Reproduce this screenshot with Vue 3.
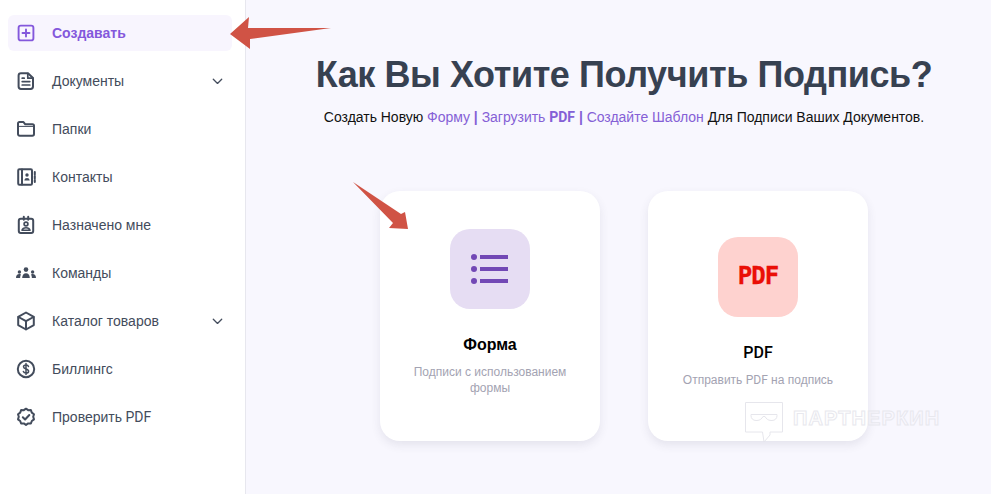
<script setup>
const items = [
  { label: 'Документы', icon: 'doc', caret: true },
  { label: 'Папки', icon: 'folder' },
  { label: 'Контакты', icon: 'contacts' },
  { label: 'Назначено мне', icon: 'badge' },
  { label: 'Команды', icon: 'team' },
  { label: 'Каталог товаров', icon: 'box', caret: true },
  { label: 'Биллингс', icon: 'dollar' },
  { label: 'Проверить', latin: 'PDF', icon: 'verify' },
]
</script>

<template>
  <div class="page">
    <aside class="sidebar">
      <div class="item active">
        <svg class="icon" viewBox="0 0 20 20" fill="none" stroke="currentColor" stroke-width="1.9">
          <rect x="2.6" y="2.6" width="14.800" height="14.800" rx="2.200" />
          <path d="M10 6.500v7M6.500 10h7" stroke-linecap="round" />
        </svg>
        <span class="label">Создавать</span>
      </div>
      <div v-for="it in items" :key="it.label" class="item">
        <svg class="icon" viewBox="0 0 20 20" fill="none" stroke="currentColor" stroke-width="2" stroke-linejoin="round" stroke-linecap="round">
          <template v-if="it.icon === 'doc'">
            <path d="M5 2.200h7l5 4.800v8.600a2.400 2.400 0 0 1-2.400 2.400H5a2.400 2.400 0 0 1-2.400-2.400V4.600A2.400 2.400 0 0 1 5 2.200z" />
            <path d="M11.800 2.500v4.700h5M6.200 7.200h2M6.200 10.600h7.600M6.200 14h7.600" stroke-width="1.700" />
          </template>
          <template v-else-if="it.icon === 'folder'">
            <path d="M2 8V4.400a1.300 1.300 0 0 1 1.300-1.300h4.200l1.800 2.200h7.200A1.500 1.500 0 0 1 18 6.800v8.200a1.700 1.700 0 0 1-1.700 1.700H3.700A1.700 1.700 0 0 1 2 15z" />
            <path d="M2.500 7.400h15" stroke-width="1" />
          </template>
          <template v-else-if="it.icon === 'contacts'">
            <rect x="2.200" y="2.200" width="13.800" height="15.600" rx="1.200" />
            <path d="M6 2.500v15M18.800 5v2.400M18.800 9v2.400M18.800 13v2" />
            <circle cx="11" cy="8" r="1.700" fill="currentColor" stroke="none" />
            <path d="M8.300 13.600c.2-1.800 1.300-2.600 2.700-2.600s2.500.8 2.700 2.600z" fill="currentColor" stroke="none" />
          </template>
          <template v-else-if="it.icon === 'badge'">
            <rect x="2.800" y="3.800" width="14.400" height="14.200" rx="2" />
            <path d="M7.800 1.800v3M12.200 1.800v3" />
            <circle cx="10" cy="9" r="1.900" stroke-width="1.700" />
            <path d="M6 15.300c.5-1.800 2.100-2.500 4-2.500s3.500.7 4 2.500z" stroke-width="1.600" />
          </template>
          <template v-else-if="it.icon === 'team'">
            <g fill="currentColor" stroke="none">
              <circle cx="10" cy="6.600" r="2.300" />
              <path d="M6.200 15c0-3 1.600-4.700 3.800-4.700s3.800 1.700 3.800 4.700z" />
              <circle cx="3.400" cy="9" r="1.700" />
              <path d="M0 15c0-2.400 1.300-3.900 3.400-3.900.6 0 1.100.1 1.500.3-.5 1-.8 2.200-.8 3.600z" />
              <circle cx="16.600" cy="9" r="1.700" />
              <path d="M20 15c0-2.400-1.300-3.900-3.400-3.900-.6 0-1.100.1-1.500.3.5 1 .8 2.200.8 3.600z" />
            </g>
          </template>
          <template v-else-if="it.icon === 'box'">
            <path d="M10 1.500l7.800 4.400v8.200L10 18.500l-7.800-4.400V5.900z" />
            <path d="M2.500 6L10 10.200 17.500 6M10 10.200v8" />
          </template>
          <template v-else-if="it.icon === 'dollar'">
            <circle cx="10" cy="10" r="8.200" />
            <path d="M12.500 7.500c-.3-1-1.200-1.600-2.500-1.600-1.400 0-2.500.8-2.500 1.900s1 1.800 2.500 2.200 2.600 1 2.600 2.200-1.100 1.900-2.600 1.900c-1.400 0-2.300-.6-2.600-1.600M10 4.400v11.200" stroke-width="1.500" />
          </template>
          <template v-else>
            <path d="M10 1.700l2.200 1.500 2.700-.1.900 2.500 2.200 1.600-.8 2.600.8 2.600-2.200 1.600-.9 2.500-2.700-.1-2.200 1.500-2.200-1.500-2.700.1-.9-2.500-2.200-1.600.8-2.600-.8-2.600 2.200-1.600.9-2.500 2.700.1z" />
            <path d="M6.800 10.200l2.300 2.300 4.200-4.500" />
          </template>
        </svg>
        <span class="label">{{ it.label }}<span v-if="it.latin" class="latin">&nbsp;{{ it.latin }}</span></span>
        <svg v-if="it.caret" class="caret" viewBox="0 0 12 8" fill="none" stroke="currentColor" stroke-width="1.500" stroke-linecap="round" stroke-linejoin="round">
          <path d="M1.200 1.500L6 6.200l4.800-4.700" />
        </svg>
      </div>
    </aside>

    <main class="main">
      <h1 class="title">Как Вы Хотите Получить Подпись?</h1>
      <p class="sub">
        Создать Новую <span class="link">Форму</span> <b class="link">|</b>
        <span class="link"> Загрузить</span> <b class="link latin">PDF</b> <b class="link">|</b>
        <span class="link"> Создайте Шаблон</span> Для Подписи Ваших Документов.
      </p>
      <div class="cards">
        <section class="card">
          <div class="tile tile-form">
            <svg width="38" height="30" viewBox="0 0 38 30" fill="#7248b5">
              <circle cx="3" cy="3" r="3" />
              <circle cx="3" cy="15" r="3" />
              <circle cx="3" cy="27" r="3" />
              <rect x="9" y="1" width="28" height="4" />
              <rect x="9" y="13" width="28" height="4" />
              <rect x="9" y="25" width="28" height="4" />
            </svg>
          </div>
          <h2 class="card-title">Форма</h2>
          <p class="card-desc">Подписи с использованием формы</p>
        </section>
        <section class="card">
          <div class="tile tile-pdf"><span class="pdf-mark">PDF</span></div>
          <h2 class="card-title latin">PDF</h2>
          <p class="card-desc">Отправить <span class="latin">PDF</span> на подпись</p>
        </section>
      </div>
    </main>

    <svg class="arrows" width="991" height="494" viewBox="0 0 991 494">
      <polygon fill="#d05345" points="230,34 249,17 248,28 331,28 250,39 250,49" />
      <polygon fill="#d05345" points="353,182 401,214 405,212 408,229 389,228 393,223" />
    </svg>

    <div class="watermark">
      <svg width="40" height="42" viewBox="0 0 40 42" fill="none" stroke="#e6e6ec" stroke-width="1">
        <path d="M1.500 1.500h37v29.500H26v3l-6 7-1.500-10H1.500z" />
        <path d="M7 13.500h26v1c0 3-2 5-5 5h-1c-3 0-5-2-6-4h-2c-1 2-3 4-6 4h-1c-3 0-5-2-5-5z" />
      </svg>
      <span class="wm-text">ПАРТНЕРКИН</span>
    </div>
  </div>
</template>

<style scoped>
.page {
  position: relative;
  display: flex;
  width: 991px;
  height: 494px;
  overflow: hidden;
  background: #f8f7fe;
  font-family: "Liberation Sans", Arial, sans-serif;
}
.latin { font-family: Roboto, "Liberation Sans", sans-serif; }
.sidebar {
  flex: none;
  box-sizing: border-box;
  width: 246px;
  padding: 9px 13px 0 8px;
  background: #fff;
  border-right: 1px solid #e7e7ee;
}
.item {
  display: flex;
  align-items: center;
  height: 36px;
  margin: 6px 0 12px;
  padding: 0 9px 0 8px;
  border-radius: 6px;
  color: #434c5c;
  font-size: 14px;
}
.item.active {
  background: #f8f5fe;
  color: #8458dc;
  font-weight: 700;
}
.icon { flex: none; width: 20px; height: 20px; margin-right: 16px; }
.label { flex: 1; white-space: nowrap; }
.caret { flex: none; width: 11px; height: 7px; }
.main {
  flex: 1;
  box-sizing: border-box;
  padding: 53px 0 0 11px;
  display: flex;
  flex-direction: column;
  align-items: center;
}
.title {
  margin: 0;
  color: #374151;
  font-size: 36px;
  line-height: 44px;
  font-weight: 700;
  letter-spacing: -0.42px;
  white-space: nowrap;
}
.sub {
  margin: 10px 0 0;
  color: #111;
  font-size: 14px;
  line-height: 20px;
  letter-spacing: -0.02px;
  white-space: nowrap;
}
.link { color: #8560d6; }
.sub b { font-weight: 700; }
.cards { display: flex; gap: 48px; margin-top: 64px; }
.card {
  display: flex;
  flex-direction: column;
  align-items: center;
  justify-content: center;
  box-sizing: border-box;
  width: 220px;
  height: 250px;
  padding: 0 30px 8px;
  background: #fff;
  border-radius: 20px;
  box-shadow: 0 4px 10px rgba(60, 60, 90, 0.1);
  text-align: center;
}
.tile {
  display: flex;
  align-items: center;
  justify-content: center;
  width: 80px;
  height: 80px;
  border-radius: 20px;
}
.tile-form { background: #e6ddf3; }
.tile-pdf { background: #fed2cf; }
.pdf-mark {
  color: #ea0f06;
  font-family: "DejaVu Sans Mono", monospace;
  font-size: 24px;
  font-weight: 700;
  letter-spacing: -1px;
  -webkit-text-stroke: 0.3px #ea0f06;
  transform: translateY(-1px) scaleY(1.050);
}
.card-title {
  margin: 26px 0 0;
  color: #000;
  font-size: 16px;
  line-height: 20px;
  font-weight: 700;
}
.card-title.latin { font-weight: 500; }
.card-desc {
  margin: 9px 0 0;
  color: #a3a3b2;
  font-size: 12px;
  line-height: 16px;
}
.arrows { position: absolute; left: 0; top: 0; pointer-events: none; }
.watermark {
  position: absolute;
  left: 744px;
  top: 401px;
  display: flex;
  align-items: flex-start;
  gap: 9px;
}
.wm-text {
  margin-top: 7px;
  color: transparent;
  -webkit-text-stroke: 1px #e8e8ee;
  font-size: 20px;
  line-height: 20px;
  font-weight: 700;
  letter-spacing: 1.100px;
  white-space: nowrap;
}
</style>
